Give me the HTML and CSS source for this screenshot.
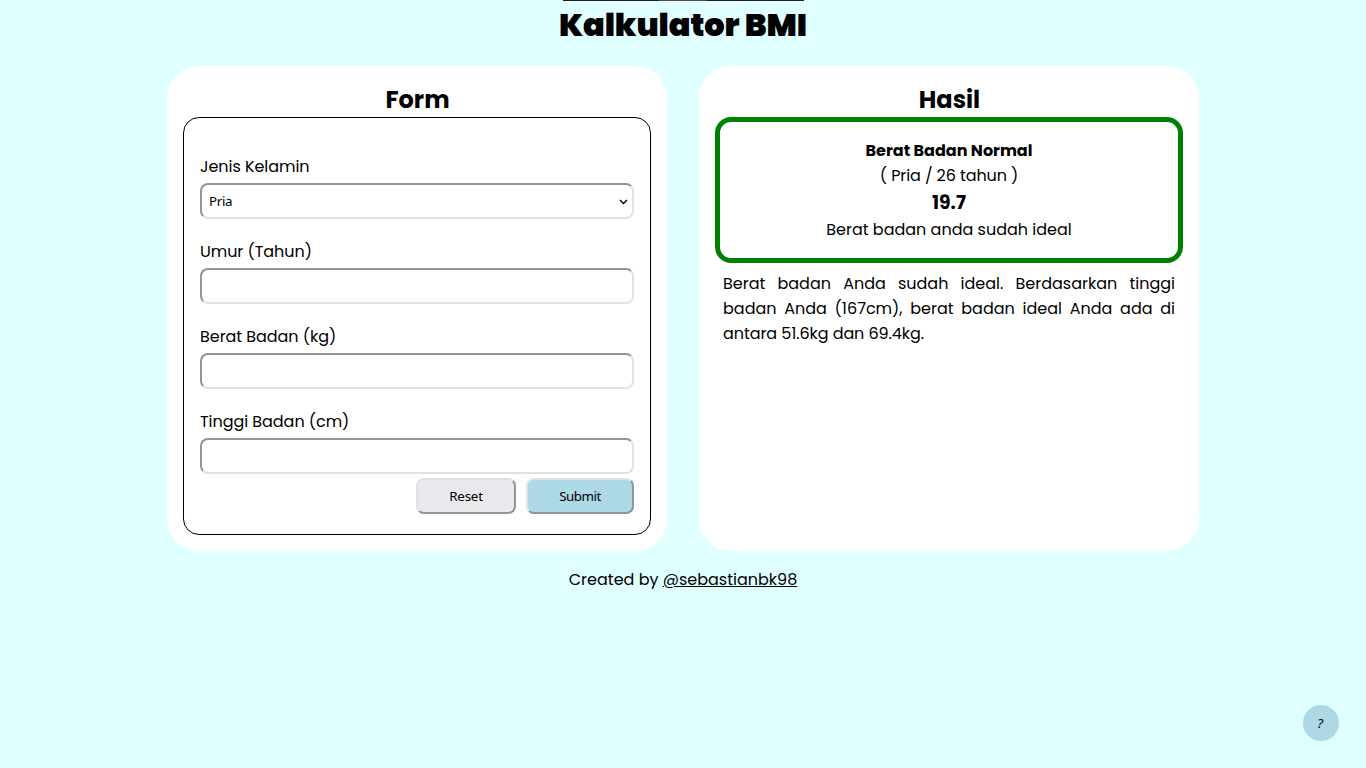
FILE: index.html
```html
<!DOCTYPE html>
<html lang="id">
<head>
<meta charset="utf-8">
<title>Kalkulator BMI</title>
<link rel="stylesheet" href="styles.css">
</head>
<body>
<div class="topbar"><span></span></div>
<h1 class="title">Kalkulator BMI</h1>
<main class="cards">
  <section class="card">
    <h2 class="heading">Form</h2>
    <form class="form">
      <label class="field"><span class="label">Jenis Kelamin</span>
        <span class="select">
          <select class="control"><option>Pria</option><option>Wanita</option></select>
          <svg class="arrow" width="9" height="6" viewBox="0 0 9 6"><path d="M1 1l3.5 3.5L8 1" fill="none" stroke="#000" stroke-width="1.4"/></svg>
        </span></label>
      <label class="field"><span class="label">Umur (Tahun)</span><input class="control" type="text"></label>
      <label class="field"><span class="label">Berat Badan (kg)</span><input class="control" type="text"></label>
      <label class="field"><span class="label">Tinggi Badan (cm)</span><input class="control" type="text"></label>
      <div class="actions">
        <button class="button reset" type="reset">Reset</button>
        <button class="button submit" type="button">Submit</button>
      </div>
    </form>
  </section>
  <section class="card">
    <h2 class="heading">Hasil</h2>
    <div class="result">
      <strong>Berat Badan Normal</strong>
      <span class="who">( Pria / 26 tahun )</span>
      <strong class="score">19.7</strong>
      <span>Berat badan anda sudah ideal</span>
    </div>
    <p class="advice">Berat badan Anda sudah ideal. Berdasarkan tinggi badan Anda (167cm), berat badan ideal Anda ada di <span class="last">antara 51.6kg dan 69.4kg.</span></p>
  </section>
</main>
<footer class="footer">Created by <a href="#">@sebastianbk98</a></footer>
<button class="help" type="button">?</button>
</body>
</html>
```
FILE: styles.css
```css
* { box-sizing: border-box; }
body {
  margin: 0;
  min-height: 768px;
  background: #e0ffff;
  color: #000;
  font: 16px/25px Poppins, Inter, sans-serif;
}
.topbar {
  position: absolute;
  top: 0;
  left: 563px;
  width: 241px;
  height: 1px;
  background: #201c1f;
}
.topbar span {
  display: block;
  width: 48px;
  height: 1px;
  margin-left: 96px;
  background: #5a4b50;
}
.title {
  margin: 0;
  padding: 1px 0 17px;
  font-size: 32px;
  line-height: 48px;
  font-weight: 900;
  letter-spacing: -0.1px;
  text-align: center;
}
.cards { display: flex; justify-content: center; gap: 32px; }
.card {
  width: 500px;
  height: 485px;
  padding: 16px;
  background: #fff;
  border-radius: 32px;
}
.heading {
  margin: 0;
  padding-left: 1px;
  font-size: 24px;
  line-height: 35px;
  font-weight: 700;
  text-align: center;
}
.form {
  height: 418px;
  padding: 36px 16px 0;
  border: 1px solid #000;
  border-radius: 16px;
}
.field { display: block; margin-bottom: 20px; }
.label { display: block; height: 29px; letter-spacing: -0.05px; }
.control {
  display: block;
  width: 100%;
  height: 36px;
  padding: 0 4px;
  border: 2px solid;
  border-color: #949494 #e2e2e2 #e2e2e2 #949494;
  border-radius: 8px;
  background: #fff;
  color: #000;
  font: 13.333px "Noto Sans", sans-serif;
}
.select { display: block; position: relative; }
select.control { appearance: none; padding: 0 7px; letter-spacing: -0.3px; }
.arrow { position: absolute; right: 6px; top: 16px; pointer-events: none; }
.actions { display: flex; justify-content: flex-end; gap: 10px; margin-top: -16px; }
.button {
  height: 36px;
  padding: 0;
  border: 2px solid;
  border-color: #e2e2e2 #949494 #949494 #e2e2e2;
  border-radius: 8px;
  color: #000;
  font: 13.333px "Noto Sans", sans-serif;
}
.reset { width: 100px; background: #e9e9ed; letter-spacing: -0.2px; }
.submit { width: 108px; background: #add8e6; letter-spacing: -0.5px; }
.result {
  display: flex;
  flex-direction: column;
  align-items: center;
  height: 146px;
  padding-top: 16px;
  border: 5px solid #008000;
  border-radius: 16px;
}
.who { letter-spacing: -0.1px; }
.score { font-size: 18.72px; line-height: 29px; }
.advice { margin: 8px 8px 0; text-align: justify; }
.last { letter-spacing: -0.08px; }
.footer { margin-top: 16px; text-align: center; }
.footer a { color: inherit; }
.help {
  position: fixed;
  right: 27px;
  bottom: 27px;
  width: 36px;
  height: 36px;
  padding: 0 2px 0 0;
  border: 0;
  border-radius: 50%;
  background: #add8e6;
  color: #000;
  font: italic 13.333px "Noto Sans", sans-serif;
}
```
